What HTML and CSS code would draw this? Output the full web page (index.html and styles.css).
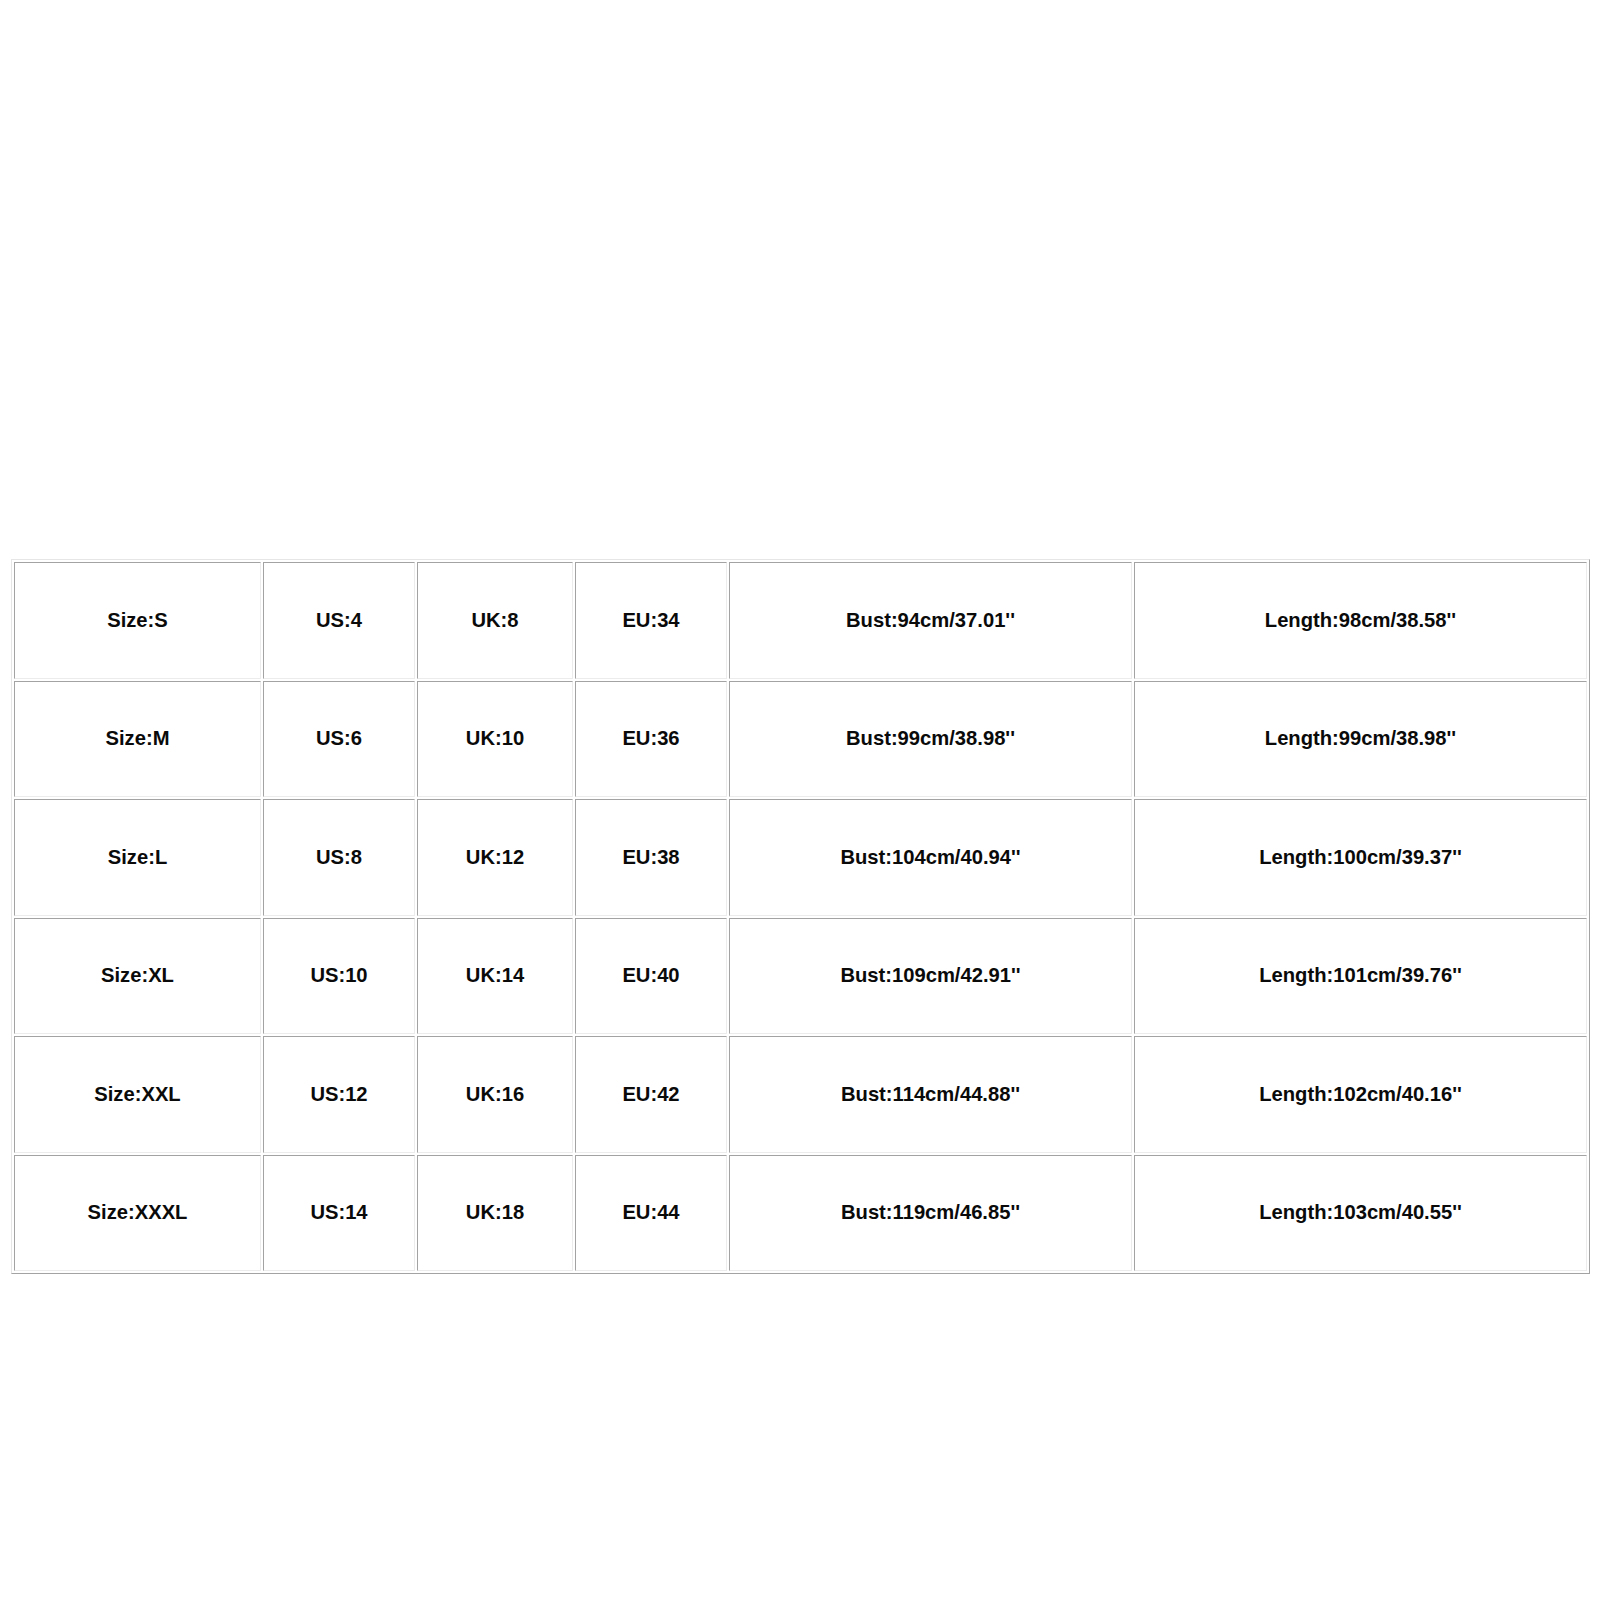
FILE: index.html
```html
<!DOCTYPE html>
<html>
<head>
<meta charset="utf-8">
<link rel="stylesheet" href="styles.css">
</head>
<body>
<table class="size-table">
  <colgroup>
    <col class="c1"><col class="c2"><col class="c3"><col class="c4"><col class="c5"><col class="c6">
  </colgroup>
  <tbody>
    <tr><td>Size:S</td><td>US:4</td><td>UK:8</td><td>EU:34</td><td>Bust:94cm/37.01''</td><td>Length:98cm/38.58''</td></tr>
    <tr><td>Size:M</td><td>US:6</td><td>UK:10</td><td>EU:36</td><td>Bust:99cm/38.98''</td><td>Length:99cm/38.98''</td></tr>
    <tr><td>Size:L</td><td>US:8</td><td>UK:12</td><td>EU:38</td><td>Bust:104cm/40.94''</td><td>Length:100cm/39.37''</td></tr>
    <tr><td>Size:XL</td><td>US:10</td><td>UK:14</td><td>EU:40</td><td>Bust:109cm/42.91''</td><td>Length:101cm/39.76''</td></tr>
    <tr><td>Size:XXL</td><td>US:12</td><td>UK:16</td><td>EU:42</td><td>Bust:114cm/44.88''</td><td>Length:102cm/40.16''</td></tr>
    <tr><td>Size:XXXL</td><td>US:14</td><td>UK:18</td><td>EU:44</td><td>Bust:119cm/46.85''</td><td>Length:103cm/40.55''</td></tr>
  </tbody>
</table>
</body>
</html>
```
FILE: styles.css
```css
html, body {
  margin: 0;
  padding: 0;
  background: #ffffff;
}
body {
  padding: 559px 0 0 11px;
}
.size-table {
  border-collapse: separate;
  border-spacing: 2px;
  table-layout: fixed;
  border: 1px solid;
  border-color: #e6e6e6 #a3a3a3 #a3a3a3 #e6e6e6;
  font-family: "Liberation Sans", Arial, sans-serif;
  font-weight: bold;
  font-size: 20.2px;
  color: #0a0a0a;
}
.c1 { width: 247px; }
.c2 { width: 152px; }
.c3 { width: 156px; }
.c4 { width: 152px; }
.c5 { width: 403px; }
.c6 { width: 453px; }
.size-table td {
  box-sizing: border-box;
  height: 116.5px;
  padding: 0;
  text-align: center;
  vertical-align: middle;
  border: 1px solid;
  border-color: #a3a3a3 #ececec #ececec #a3a3a3;
  white-space: nowrap;
}
```
